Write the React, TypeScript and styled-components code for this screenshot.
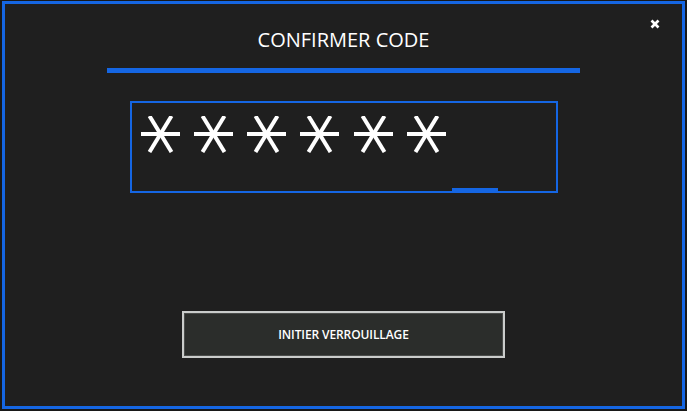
import React from "react";
import styled, {createGlobalStyle} from "styled-components";

const GlobalStyle = createGlobalStyle`
  html, body {
    margin: 0;
    padding: 0;
    background: #181818;
  }
  #root {
    width: 687px;
    height: 411px;
  }
`;

const Frame = styled.div`
  position: relative;
  box-sizing: border-box;
  margin: 1px 0 0 2px;
  width: 683px;
  height: 408px;
  border: 3px solid #1566e3;
  background: #1f1f1f;
  display: flex;
  flex-direction: column;
  align-items: center;
  padding-top: 23px;
  font-family: "Open Sans", "Liberation Sans", sans-serif;
  color: #ffffff;
`;

const CloseButton = styled.button`
  position: absolute;
  top: 15px;
  right: 22px;
  width: 10px;
  height: 10px;
  padding: 0;
  border: none;
  background: none;
  display: flex;
  cursor: pointer;
`;

const Title = styled.h1`
  margin: 0;
  font-size: 20px;
  line-height: 25px;
  font-weight: 500;
  letter-spacing: 0;
`;

const Bar = styled.div`
  margin-top: 16px;
  width: 473px;
  height: 5px;
  background: #1566e3;
`;

const CodeBox = styled.div`
  position: relative;
  box-sizing: border-box;
  margin-top: 28px;
  width: 428px;
  height: 92px;
  border: 2px solid #1566e3;
  padding: 13px 0 0 9px;
  display: flex;
  align-items: flex-start;
  gap: 14.3px;
`;

const Cursor = styled.span`
  position: absolute;
  left: 320px;
  bottom: 0;
  width: 46px;
  height: 3px;
  background: #1566e3;
`;

const Button = styled.button`
  box-sizing: border-box;
  margin-top: 118px;
  width: 323px;
  height: 47px;
  border: 2px solid #cacccb;
  box-shadow: inset 0 0 0 1px #4a4c4a;
  background: #2b2d2b;
  color: #ffffff;
  font-family: "Open Sans", "Liberation Sans", sans-serif;
  font-size: 12px;
  font-weight: 600;
  letter-spacing: -0.1px;
  cursor: pointer;
`;

function Star() {
    return (
        <svg width="39" height="37" viewBox="0 0 39 37">
            <g stroke="#ffffff" strokeWidth="4" fill="none">
                <line x1="0" y1="18" x2="39" y2="18"/>
                <line x1="8.5" y1="0" x2="30.5" y2="36"/>
                <line x1="30.5" y1="0" x2="8.5" y2="36"/>
            </g>
        </svg>
    );
}

export default function App() {
    const code = "123456";

    return (
        <>
            <GlobalStyle/>
            <Frame>
                <CloseButton aria-label="fermer">
                    <svg width="10" height="10" viewBox="0 0 10 10">
                        <g stroke="#ffffff" strokeWidth="2.6">
                            <line x1="1.5" y1="1.5" x2="8.5" y2="8.5"/>
                            <line x1="8.5" y1="1.5" x2="1.5" y2="8.5"/>
                        </g>
                    </svg>
                </CloseButton>
                <Title>CONFIRMER CODE</Title>
                <Bar/>
                <CodeBox>
                    {code.split("").map((c, i) => <Star key={i}/>)}
                    <Cursor/>
                </CodeBox>
                <Button>INITIER VERROUILLAGE</Button>
            </Frame>
        </>
    );
}
